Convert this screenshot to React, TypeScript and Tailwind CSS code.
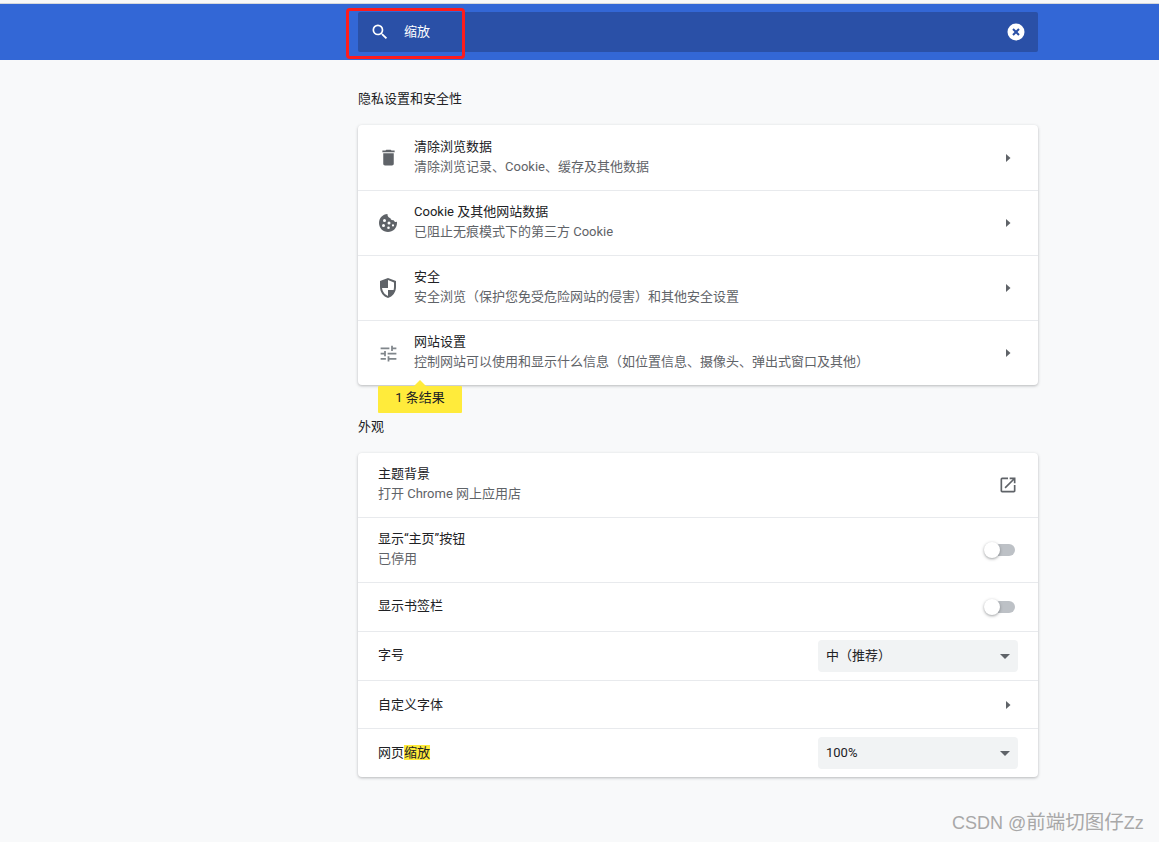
import React from "react";

const FONT = "font-['Roboto','Noto_Sans_CJK_SC',sans-serif]";

function Arrow() {
  return (
    <svg width="20" height="20" viewBox="0 0 20 20" className="text-[#5f6368]">
      <path d="M8 6l4.500 4L8 14z" fill="currentColor" />
    </svg>
  );
}

function Caret() {
  return (
    <svg width="10" height="5" viewBox="0 0 10 5" className="text-[#5f6368]">
      <path d="M0 0h10L5 5z" fill="currentColor" />
    </svg>
  );
}

function TrashIcon() {
  return (
    <svg width="21" height="21" viewBox="0 0 24 24" fill="#5f6368">
      <path d="M6 19c0 1.100.9 2 2 2h8c1.100 0 2-.9 2-2V7H6v12zM19 4h-3.500l-1-1h-5l-1 1H5v2h14V4z" />
    </svg>
  );
}

function CookieIcon() {
  return (
    <svg width="24" height="24" viewBox="0 0 24 24" fill="#5f6368">
      <path
        fillRule="evenodd"
        d="M11.500 3C6.600 3.200 3 7.200 3 12c0 5 4 9 9 9s9-4 9-9c0-.4 0-.8-.1-1.200-1.300.5-2.800-.2-3.200-1.600-1.600.4-3.100-.6-3.400-2.200-1.500 0-2.600-1.500-2.800-3zM8.500 11a1.500 1.500 0 1 1 0-3 1.500 1.500 0 0 1 0 3zm-1 5a1.500 1.500 0 1 1 0-3 1.500 1.500 0 0 1 0 3zm5 2a1.300 1.300 0 1 1 0-2.600 1.300 1.300 0 0 1 0 2.600zm.5-4.500a1.500 1.500 0 1 1 0-3 1.500 1.500 0 0 1 0 3zm4 2a1.100 1.100 0 1 1 0-2.200 1.100 1.100 0 0 1 0 2.200z"
      />
    </svg>
  );
}

function ShieldIcon() {
  return (
    <svg width="24" height="24" viewBox="0 0 24 24" fill="#5f6368">
      <path d="M12 2L4 5v6.100c0 5 3.400 9.700 8 10.900 4.600-1.200 8-5.900 8-10.900V5l-8-3zm6 9.100c0 1-.2 1.900-.4 2.900H12v6c-3.300-1.100-6-4.800-6-8.900V12h6V4.100l6 2.300v4.700z" />
    </svg>
  );
}

function TuneIcon() {
  return (
    <svg width="21" height="21" viewBox="0 0 24 24" fill="#80868b">
      <path d="M3 17v2h6v-2H3zM3 5v2h10V5H3zm10 16v-2h8v-2h-8v-2h-2v6h2zM7 9v2H3v2h4v2h2V9H7zm14 4v-2H11v2h10zm-6-4h2V7h4V5h-4V3h-2v6z" />
    </svg>
  );
}

function ExternalIcon() {
  return (
    <svg width="20" height="20" viewBox="0 0 24 24" fill="#5f6368">
      <path d="M19 19H5V5h7V3H5a2 2 0 0 0-2 2v14a2 2 0 0 0 2 2h14c1.100 0 2-.9 2-2v-7h-2v7zM14 3v2h3.600l-9.800 9.800 1.400 1.400L19 6.400V10h2V3h-7z" />
    </svg>
  );
}

function Toggle() {
  return (
    <div className="relative mr-[3px] h-3 w-[30px] rounded-full bg-[#bdc1c6]">
      <div className="absolute left-[-1px] top-[-2px] h-4 w-4 rounded-full bg-white shadow-[0_1px_3px_rgba(60,64,67,0.5)]" />
    </div>
  );
}

function Select({ label }: { label: string }) {
  return (
    <div className="flex h-8 w-[200px] items-center justify-between rounded bg-[#f1f3f4] pl-[8px] pr-[8px] text-[13px] text-[#202124]">
      <span>{label}</span>
      <Caret />
    </div>
  );
}

function IconRow({
  icon,
  title,
  sub,
  first,
}: {
  icon: React.ReactNode;
  title: string;
  sub: string;
  first?: boolean;
}) {
  return (
    <div
      className={`flex h-[65px] items-center pl-[18px] pr-[20px] ${
        first ? "" : "border-t border-[#e8eaed]"
      }`}
    >
      <div className="mr-[14px] flex w-[24px] justify-center">{icon}</div>
      <div className={`flex-1 ${first ? "pb-[1px]" : "pb-[2px]"}`}>
        <div className="text-[13px] leading-[20px] text-[#202124]">{title}</div>
        <div className="text-[13px] leading-[20px] text-[#5f6368]">{sub}</div>
      </div>
      <Arrow />
    </div>
  );
}

function Row({
  height,
  children,
  first,
}: {
  height: string;
  children: React.ReactNode;
  first?: boolean;
}) {
  return (
    <div
      className={`flex items-center justify-between pl-5 pr-5 ${height} ${
        first ? "" : "border-t border-[#e8eaed]"
      }`}
    >
      {children}
    </div>
  );
}

export default function App() {
  return (
    <div className={`relative h-[842px] w-[1159px] overflow-hidden bg-[#f8f9fa] ${FONT}`}>
      <div className="h-1 border-b border-[#d6d8db] bg-[#f8f8f8]" />
      <header className="flex h-14 items-center bg-[#3367d6] pl-[358px]">
        <div className="flex h-10 w-[680px] items-center rounded-[2px] bg-[#2a50a7] pl-[12px] pr-[12px] text-white">
          <svg width="20" height="20" viewBox="0 0 24 24" fill="white">
            <path d="M15.500 14h-.79l-.28-.27A6.470 6.470 0 0 0 16 9.500 6.500 6.500 0 1 0 9.500 16c1.610 0 3.090-.59 4.230-1.570l.27.28v.79l5 4.990L20.490 19l-4.990-5zm-6 0C7.010 14 5 11.990 5 9.500S7.010 5 9.500 5 14 7.010 14 9.500 11.990 14 9.500 14z" />
          </svg>
          <span className="ml-[14px] flex-1 text-[13px]">缩放</span>
          <svg width="20" height="20" viewBox="0 0 20 20">
            <circle cx="10" cy="10" r="8.500" fill="white" />
            <path d="M7 7l6 6M13 7l-6 6" stroke="#2a50a7" strokeWidth="2" />
          </svg>
        </div>
      </header>

      <main className="ml-[358px] w-[680px]">
        <h2 className="mt-[29px] text-[13px] leading-[20px] text-[#202124]">隐私设置和安全性</h2>
        <section className="mt-[16px] rounded bg-white shadow-[0_1px_3px_rgba(60,64,67,0.35)]">
          <IconRow first icon={<TrashIcon />} title="清除浏览数据" sub="清除浏览记录、Cookie、缓存及其他数据" />
          <IconRow icon={<CookieIcon />} title="Cookie 及其他网站数据" sub="已阻止无痕模式下的第三方 Cookie" />
          <IconRow icon={<ShieldIcon />} title="安全" sub="安全浏览（保护您免受危险网站的侵害）和其他安全设置" />
          <IconRow icon={<TuneIcon />} title="网站设置" sub="控制网站可以使用和显示什么信息（如位置信息、摄像头、弹出式窗口及其他）" />
        </section>

        <h2 className="mt-[32px] text-[13px] leading-[20px] text-[#202124]">外观</h2>
        <section className="mt-[16px] rounded bg-white shadow-[0_1px_3px_rgba(60,64,67,0.35)]">
          <Row first height="h-[64px]">
            <div className="pb-[2px]">
              <div className="text-[13px] leading-[20px] text-[#202124]">主题背景</div>
              <div className="text-[13px] leading-[20px] text-[#5f6368]">打开 Chrome 网上应用店</div>
            </div>
            <ExternalIcon />
          </Row>
          <Row height="h-[65px]">
            <div className="pb-[2px]">
              <div className="text-[13px] leading-[20px] text-[#202124]">显示“主页”按钮</div>
              <div className="text-[13px] leading-[20px] text-[#5f6368]">已停用</div>
            </div>
            <Toggle />
          </Row>
          <Row height="h-[49px]">
            <span className="pb-[2px] text-[13px] text-[#202124]">显示书签栏</span>
            <Toggle />
          </Row>
          <Row height="h-[49px]">
            <span className="pb-[2px] text-[13px] text-[#202124]">字号</span>
            <Select label="中（推荐）" />
          </Row>
          <Row height="h-[48px]">
            <span className="text-[13px] text-[#202124]">自定义字体</span>
            <Arrow />
          </Row>
          <Row height="h-[49px]">
            <span className="text-[13px] text-[#202124]">
              网页<span className="bg-[#ffeb3b]">缩放</span>
            </span>
            <Select label="100%" />
          </Row>
        </section>
      </main>

      {/* search bubble under the 网站设置 row */}
      <div className="absolute left-[378px] top-[386px] flex h-[27px] w-[84px] items-center justify-center rounded-[1px] bg-[#ffeb3b] pb-[3px] text-[13px] text-[#202124]">
        <div className="absolute left-[36px] top-[-6px] h-0 w-0 border-x-[6px] border-b-[6px] border-x-transparent border-b-[#ffeb3b]" />
        1 条结果
      </div>

      {/* red annotation box */}
      <div className="absolute left-[346px] top-[8px] h-[51px] w-[119px] rounded-[4px] border-[3px] border-[#fe1c1c]" />

      <div className="absolute left-[952px] top-[810px] whitespace-nowrap font-['Liberation_Sans','Noto_Sans_CJK_SC',sans-serif] text-[18px] leading-[24px] text-[#a8a8a8]">
        CSDN @<span className="text-[19.5px]">前端切图仔</span>Zz
      </div>
    </div>
  );
}
